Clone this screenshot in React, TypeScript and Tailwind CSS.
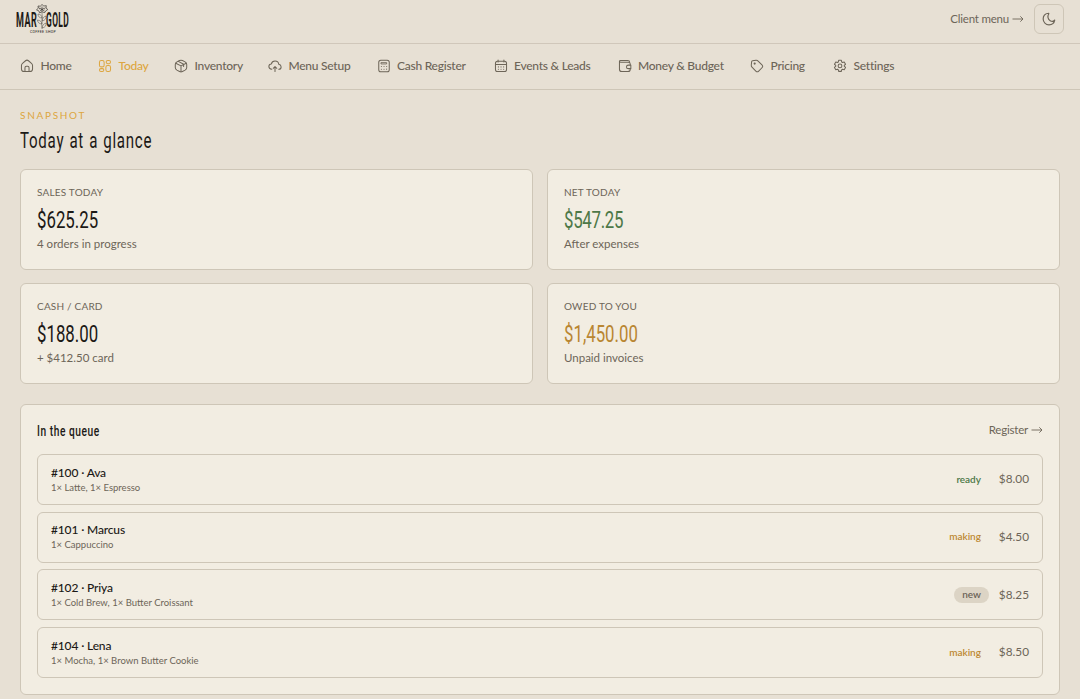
import React from 'react';
import clsx from 'clsx';

type IconName = 'home' | 'widgets' | 'box' | 'cloud' | 'calculator' | 'calendar' | 'wallet' | 'tag' | 'gear';

const iconShapes: Record<IconName, React.ReactNode> = {
  home: (
    <>
      <path d="M2.5 11c0-1.600.5-2.500 1.800-3.600L9.500 3c1.700-1.400 3.300-1.400 5 0l5.200 4.400c1.300 1.100 1.800 2 1.800 3.600v6c0 3.200-1.300 4.500-4.500 4.500H7c-3.200 0-4.500-1.300-4.500-4.500z" />
      <path d="M8.500 21.500V15c0-1.700.8-2.500 2.500-2.500h2c1.700 0 2.500.8 2.500 2.500v6.500" />
    </>
  ),
  widgets: (
    <>
      <rect x="2.5" y="2.5" width="8" height="11" rx="3" />
      <rect x="14" y="2.5" width="7.5" height="5.5" rx="2.7" />
      <rect x="13.5" y="11" width="8" height="10.5" rx="3" />
      <rect x="2.5" y="16.5" width="7.5" height="5" rx="2.5" />
    </>
  ),
  box: (
    <>
      <path d="M9.500 2.700c1.800-.9 3.200-.9 5 0l4.500 2.300c2 1.100 2.800 2.200 2.800 4.500v5c0 2.300-.8 3.400-2.800 4.500l-4.500 2.300c-1.800.9-3.200.9-5 0L5 19c-2-1.100-2.800-2.200-2.800-4.500v-5C2.200 7.200 3 6.100 5 5z" />
      <path d="M3 7.200l9 4.600 9-4.600M12 12v9.800M7.500 4l9 5v4" />
    </>
  ),
  cloud: (
    <>
      <path d="M6.500 17.500C3.600 17.500 1.500 15.600 1.500 13c0-2.500 1.900-4.400 4.300-4.500C6.500 5.500 9 3.500 12 3.500c3.500 0 6.200 2.400 6.500 5.700 2.400.5 4 2.200 4 4.300 0 2.300-1.700 4-4 4" />
      <path d="M12 21.500v-8M9 16l3-3 3 3" />
    </>
  ),
  calculator: (
    <>
      <rect x="3" y="2" width="18" height="20" rx="3.5" />
      <path d="M7.500 6.200h9v2.300h-9z" strokeWidth="1.4" />
      <path d="M7.500 13h.1M12 13h.1M16.500 13h.1M7.500 17.500h.1M12 17.500h.1M16.500 17v.5" />
    </>
  ),
  calendar: (
    <>
      <rect x="2.5" y="4" width="19" height="17.5" rx="3.5" />
      <path d="M7 1.800V5M17 1.800V5M2.800 9.500h18.400" />
      <path d="M7.500 13.500h.1M12 13.500h.1M16.500 13.500h.1M7.500 17.500h.1M12 17.500h.1M16.500 17.500h.1" />
    </>
  ),
  wallet: (
    <>
      <path d="M21 10V8.500c0-2-1.200-3-3.500-3H4.500c-1.500 0-2-.6-2-1.500 0-1.200.7-1.500 2-1.500h12c2.300 0 3.500 1 3.500 3M2.500 4v13.500c0 2.700 1.200 4 4 4H17c2.800 0 4-1.300 4-4V17" />
      <path d="M22 10.500h-4c-2 0-3.500 1.200-3.500 3s1.500 3 3.500 3h4z" />
    </>
  ),
  tag: (
    <>
      <path d="M4.200 3.200l6-.9c1.600-.2 2.600.1 3.700 1.200l6.600 6.600c1.700 1.700 1.700 3.200 0 4.900l-5.600 5.600c-1.700 1.700-3.200 1.700-4.900 0L3.400 14C2.300 12.900 2 11.900 2.200 10.300l.6-5.700c.1-.8.6-1.300 1.400-1.400z" />
      <circle cx="8" cy="7.8" r="1" />
    </>
  ),
  gear: (
    <>
      <path d="M9.700 2.200h4.600l.7 3 1.300.7 2.900-.9 2.300 4-2.200 2v1.400l2.200 2-2.300 4-2.900-.9-1.300.7-.7 3H9.700l-.7-3-1.300-.7-2.900.9-2.300-4 2.200-2V11l-2.200-2 2.300-4 2.900.9L9 5.200z" />
      <circle cx="12" cy="11.8" r="3.2" />
    </>
  ),
};

const Icon = ({ name }: { name: IconName }) => (
  <svg viewBox="0 0 24 24" fill="none" stroke="currentColor" strokeWidth="1.75" strokeLinecap="round" strokeLinejoin="round" className="size-3.5 shrink-0">
    {iconShapes[name]}
  </svg>
);

const navItems: { label: string; icon: IconName; width: string; active?: boolean }[] = [
  { label: 'Home', icon: 'home', width: 'w-[78px]' },
  { label: 'Today', icon: 'widgets', width: 'w-[76px]', active: true },
  { label: 'Inventory', icon: 'box', width: 'w-[94px]' },
  { label: 'Menu Setup', icon: 'cloud', width: 'w-[108.5px]' },
  { label: 'Cash Register', icon: 'calculator', width: 'w-[117px]' },
  { label: 'Events & Leads', icon: 'calendar', width: 'w-[124px]' },
  { label: 'Money & Budget', icon: 'wallet', width: 'w-[132.5px]' },
  { label: 'Pricing', icon: 'tag', width: 'w-[83px]' },
  { label: 'Settings', icon: 'gear', width: 'w-[70px]' },
];

const stats = [
  { label: 'Sales today', value: '$625.25', note: '4 orders in progress', color: 'text-[#1c1916]' },
  { label: 'Net today', value: '$547.25', note: 'After expenses', color: 'text-[#4d7847] tracking-[-0.4px]' },
  { label: 'Cash / card', value: '$188.00', note: '+ $412.50 card', color: 'text-[#1c1916]' },
  { label: 'Owed to you', value: '$1,450.00', note: 'Unpaid invoices', color: 'text-[#b98632]' },
];

const orders = [
  { id: 100, name: 'Ava', items: '1× Latte, 1× Espresso', status: 'ready', total: '$8.00' },
  { id: 101, name: 'Marcus', items: '1× Cappuccino', status: 'making', total: '$4.50' },
  { id: 102, name: 'Priya', items: '1× Cold Brew, 1× Butter Croissant', status: 'new', total: '$8.25' },
  { id: 104, name: 'Lena', items: '1× Mocha, 1× Brown Butter Cookie', status: 'making', total: '$8.50' },
];

const statusStyles: Record<string, string> = {
  ready: 'text-[#4d7847]',
  making: 'text-[#bd8831]',
  new: 'bg-[#dcd4c5] text-[#6b6357]',
};

const Arrow = () => (
  <svg viewBox="0 0 12 8" fill="none" stroke="currentColor" strokeWidth="0.9" className="h-2 w-3">
    <path d="M0.500 4h10.500M8.300 1.300L11 4 8.300 6.700" />
  </svg>
);

const Logo = () => (
  <div className="relative h-9 w-[54px] text-[#1c1916]">
    <div className="absolute top-[6px] left-0 flex h-5 w-[54px] items-center justify-between font-['Roboto'] text-[21px] leading-5 font-bold">
      <span className="w-[21px] origin-left scale-x-[0.43] tracking-[1px]">MAR</span>
      <span className="w-[24px] origin-left scale-x-[0.4] tracking-[1px]">GOLD</span>
    </div>
    <svg viewBox="0 0 14 26" fill="none" stroke="currentColor" strokeWidth="0.6" className="absolute top-0 left-[19px] h-[26px] w-3.5">
      <path d="M7 .5l1.800 1.500 2.500-.3-.3 2.300 1.800 1.500-2 1.300-1 1.700L7 8l-2.500.8L4 7 1.500 5.800 3.300 4.200 3 2l2.300.2zM5 4l2 1.500L9 4M5 7l2-1.500L9.500 7M7 2.500v5.500M4 3.500l1 2M10.200 3.500l-1 2" />
      <path opacity="0.65" d="M7 9c.8 5-.8 10 0 16M7 14c-3 0-4-2-4-4 3 .5 4 2 4 4zM7.200 17c2.800-.5 4-2.500 3.800-5-2.500.8-3.800 2.500-3.800 5zM7 20c-3 0-4.500-2-4.500-4C5.500 16.500 7 18 7 20zM7.200 24c3-.5 4-2.500 4-5-2.800.8-4 2.500-4 5z" />
    </svg>
    <span className="absolute top-[26px] left-[14px] font-['Roboto'] text-[3.5px] leading-[5px] tracking-[0.3px] whitespace-nowrap">COFFEE SHOP</span>
  </div>
);

const StatCard = ({ label, value, note, color }: (typeof stats)[number]) => (
  <div className="h-[101px] rounded-md border border-[#cec6b7] bg-[#f2ede2] px-4 pt-[15px]">
    <p className="text-[10px] leading-[14px] tracking-[0.2px] uppercase">{label}</p>
    <p className={clsx("mt-[6px] w-max origin-left scale-x-[0.7] font-['Roboto'] text-[24px] leading-[30px]", color)}>{value}</p>
    <p className="mt-[1px] text-[11.5px] leading-4">{note}</p>
  </div>
);

export default function App() {
  return (
    <div className="h-[699px] overflow-hidden bg-[#e7e0d4] font-['Lato','Open_Sans',sans-serif] text-[12px] text-[#6d6558]">
      <header className="flex h-11 items-start justify-between border-b border-[#d0c7ba] pt-1 pr-4 pl-4">
        <Logo />
        <div className="flex items-center gap-[10px]">
          <a className="flex items-center gap-[3px]">
            <span className="text-[11.5px] tracking-[-0.2px]">Client menu</span>
            <Arrow />
          </a>
          <button className="flex size-[30px] items-center justify-center rounded-md border border-[#cec6b7]">
            <svg viewBox="0 0 24 24" fill="none" stroke="currentColor" strokeWidth="2" strokeLinejoin="round" className="size-3.5">
              <path d="M21.500 14c-1.500 2-5 2.500-7.500 1C10 12.500 9 7.500 11.500 3.500 12 2.500 11.500 2 10.500 2.200 5.500 3 2 7 2 12c0 5.500 4.500 10 10 10 5 0 9-3.500 9.800-8z" />
            </svg>
          </button>
        </div>
      </header>

      <nav className="flex h-[46px] items-center border-b border-[#cec6b7] pb-[2px] pl-5 font-medium">
        {navItems.map(item => (
          <a key={item.label} className={clsx('flex shrink-0 items-center gap-[6.5px] whitespace-nowrap', item.width, item.active && 'text-[#dda640]')}>
            <Icon name={item.icon} />
            <span className="tracking-[-0.25px]">{item.label}</span>
          </a>
        ))}
      </nav>

      <main className="px-5 pt-[17px]">
        <p className="text-[10px] leading-4 tracking-[1.7px] text-[#dda640] uppercase">Snapshot</p>
        <h1 className="mt-[2px] w-max origin-left scale-x-[0.67] font-['Roboto'] text-[22.5px] leading-[30px] tracking-[1.1px] text-[#1c1916] [word-spacing:1px]">Today at a glance</h1>

        <section className="mt-[14px] grid grid-cols-2 gap-x-[14px] gap-y-[13px]">
          {stats.map(stat => <StatCard key={stat.label} {...stat} />)}
        </section>

        <section className="mt-5 h-[291px] rounded-md border border-[#cec6b7] bg-[#f2ede2] px-4 pt-4">
          <div className="flex h-5 items-center justify-between">
            <h2 className="w-max origin-left scale-x-[0.68] pt-[1px] font-['Roboto'] text-[15px] font-medium tracking-[0.8px] text-[#1c1916]">In the queue</h2>
            <a className="flex items-center gap-[3px] pb-[2px]">
              <span className="text-[11.5px] tracking-[-0.2px]">Register</span>
              <Arrow />
            </a>
          </div>
          <ul className="mt-[13px] flex flex-col gap-[6.7px]">
            {orders.map(order => (
              <li key={order.id} className="flex h-[51px] items-center justify-between rounded-md border border-[#cec6b7] px-[13px]">
                <div>
                  <p className="text-[12px] leading-4 font-medium tracking-[-0.15px] text-[#1c1916]">#{order.id} · {order.name}</p>
                  <p className="text-[9.5px] leading-[14px]">{order.items}</p>
                </div>
                <div className="flex items-center gap-[10px]">
                  <span className={clsx('rounded-full px-2 pb-[2px] text-[10px] leading-[14px] font-semibold tracking-[-0.05px]', statusStyles[order.status])}>{order.status}</span>
                  <span className="pb-[1px] text-[11.8px]">{order.total}</span>
                </div>
              </li>
            ))}
          </ul>
        </section>
      </main>
    </div>
  );
}
